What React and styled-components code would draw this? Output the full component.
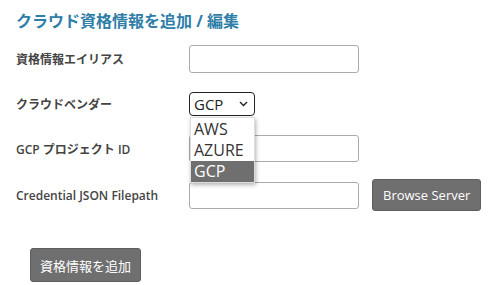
import React from 'react';
import styled, { createGlobalStyle } from 'styled-components';

const Global = createGlobalStyle`
  body {
    margin: 0;
    background: #fff;
    font-family: "Open Sans", "Noto Sans CJK JP", sans-serif;
  }
`;

const Page = styled.div`
  padding: 10px 16px 0 16px;
`;

const Title = styled.h2`
  margin: 0 0 13px 0;
  font-size: 16px;
  font-weight: 700;
  color: #2f7ea8;
  line-height: 22px;
`;

const Form = styled.div`
  display: grid;
  grid-template-columns: 173px auto;
  row-gap: 17px;
  align-items: center;
`;

const Label = styled.label`
  font-size: 12px;
  font-weight: 600;
  color: #444;
`;

const Field = styled.div`
  display: flex;
  align-items: center;
  gap: 13px;
  position: relative;
`;

const TextInput = styled.input`
  box-sizing: border-box;
  width: 170px;
  height: ${p => p.$h || 28}px;
  border: 1px solid #aaa;
  border-radius: 3px;
  background: #fff;
`;

const SelectBox = styled.div`
  box-sizing: border-box;
  width: 66px;
  height: 24px;
  margin: 2px 0;
  border: 1px solid #222;
  border-radius: 4px;
  display: flex;
  align-items: center;
  justify-content: space-between;
  padding: 0 6px 0 4px;
  font-size: 15px;
  color: #222;
`;

const Menu = styled.ul`
  position: absolute;
  top: 27px;
  left: 1px;
  width: 63px;
  margin: 0;
  padding: 1px 0 0 0;
  list-style: none;
  background: #fff;
  border: 1px solid #ddd;
  box-shadow: 1px 2px 4px rgba(0, 0, 0, 0.3);
  z-index: 2;
`;

const Option = styled.li`
  font-size: 16px;
  line-height: 21px;
  padding: 0 3px;
  color: ${p => (p.$active ? '#fff' : '#333')};
  background: ${p => (p.$active ? '#6f6f6f' : 'transparent')};
`;

const Button = styled.button`
  font-family: "Open Sans", "Noto Sans CJK JP", sans-serif;
  font-size: 13px;
  white-space: nowrap;
  color: #fff;
  background: #6f6f6f;
  border: 1px solid #5e5e5e;
  border-radius: 3px;
  height: ${p => p.$h}px;
  padding: 0 ${p => p.$px}px;
`;

const Footer = styled.div`
  padding: 37px 0 0 14px;
`;

const Chevron = () => (
  <svg width="9" height="6" viewBox="0 0 9 6">
    <path d="M1 1l3.5 3.5L8 1" stroke="#222" strokeWidth="1.4" fill="none" />
  </svg>
);

export default function App() {
  return (
    <Page>
      <Global />
      <Title>クラウド資格情報を追加 / 編集</Title>
      <Form>
        <Label>資格情報エイリアス</Label>
        <Field>
          <TextInput />
        </Field>
        <Label>クラウドベンダー</Label>
        <Field>
          <SelectBox>
            <span>GCP</span>
            <Chevron />
          </SelectBox>
          <Menu>
            <Option>AWS</Option>
            <Option>AZURE</Option>
            <Option $active>GCP</Option>
          </Menu>
        </Field>
        <Label>GCP プロジェクト ID</Label>
        <Field>
          <TextInput $h={27} />
        </Field>
        <Label>Credential JSON Filepath</Label>
        <Field>
          <TextInput $h={27} />
          <Button $h={32} $px={10}>Browse Server</Button>
        </Field>
      </Form>
      <Footer>
        <Button $h={34} $px={9}>資格情報を追加</Button>
      </Footer>
    </Page>
  );
}
